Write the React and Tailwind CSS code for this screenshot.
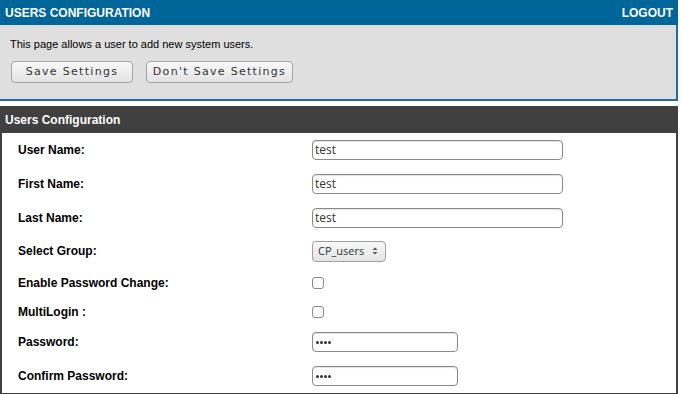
const rows = [
  { label: 'User Name:', kind: 'text', value: 'test', h: 'h-[34px]' },
  { label: 'First Name:', kind: 'text', value: 'test', h: 'h-[34px]' },
  { label: 'Last Name:', kind: 'text', value: 'test', h: 'h-[33px]' },
  { label: 'Select Group:', kind: 'select', value: 'CP_users', h: 'h-[34px]' },
  { label: 'Enable Password Change:', kind: 'check', h: 'h-[30px]' },
  { label: 'MultiLogin :', kind: 'check', h: 'h-[27px]' },
  { label: 'Password:', kind: 'password', h: 'h-[34px]' },
  { label: 'Confirm Password:', kind: 'password', h: 'h-[34px]' }
]

const Field = ({ row }) => {
  if (row.kind === 'text') {
    return (
      <div className="w-[251px] h-[20px] border border-[#8a8a8a] rounded-[4px] bg-white flex items-center pl-[2px] text-[12px] text-[#333] font-['Open_Sans',sans-serif] shadow-[inset_0_1px_1px_rgba(0,0,0,0.12)]">
        {row.value}
      </div>
    )
  }
  if (row.kind === 'password') {
    return (
      <div className="w-[146px] h-[20px] border border-[#8a8a8a] rounded-[4px] bg-white flex items-center pl-[3px] gap-[1px] shadow-[inset_0_1px_1px_rgba(0,0,0,0.12)]">
        {[0, 1, 2, 3].map(i => (
          <span key={i} className="w-[3px] h-[3px] rounded-full bg-[#333]"></span>
        ))}
      </div>
    )
  }
  if (row.kind === 'select') {
    return (
      <div className="w-[74px] h-[21px] border border-[#a0a0a0] rounded-[4px] bg-gradient-to-b from-[#f8f8f8] to-[#e4e4e4] flex items-center justify-between pl-[5px] pr-[7px] text-[11px] text-[#333] font-['Open_Sans',sans-serif]">
        <span>{row.value}</span>
        <svg width="6" height="10" viewBox="0 0 6 10">
          <path d="M3 1.5 L5.5 4 L0.5 4 Z" fill="#555" />
          <path d="M3 8.5 L5.5 6 L0.5 6 Z" fill="#555" />
        </svg>
      </div>
    )
  }
  return <div className="w-[12px] h-[12px] border border-[#8a8a8a] rounded-[3px] bg-white"></div>
}

const App = () => {
  return (
    <div className="w-[678px] bg-white font-['Liberation_Sans',Arial,sans-serif]">
      <div className="h-[25px] bg-[#006699] flex items-center justify-between px-[5px] text-white text-[12px] font-bold">
        <span>USERS CONFIGURATION</span>
        <span>LOGOUT</span>
      </div>

      <div className="h-[76px] bg-[#dfdfdf] border-r-2 border-b-2 border-[#1f6f98] pl-[11px] pt-[12px]">
        <p className="text-[11px] text-black leading-[14px] -ml-[1px]">This page allows a user to add new system users.</p>
        <div className="flex gap-[13px] mt-[10px]">
          <button className="w-[122px] h-[22px] border border-[#a6a6a6] rounded-[4px] bg-gradient-to-b from-[#f9f9f9] to-[#e3e3e3] text-[11px] text-[#333] tracking-[1.3px] font-['DejaVu_Sans',sans-serif]">
            Save Settings
          </button>
          <button className="w-[147px] h-[22px] border border-[#a6a6a6] rounded-[4px] bg-gradient-to-b from-[#f9f9f9] to-[#e3e3e3] text-[11px] text-[#333] tracking-[1.3px] font-['DejaVu_Sans',sans-serif]">
            Don't Save Settings
          </button>
        </div>
      </div>

      <div className="mt-[5px] h-[27px] bg-[#404040] flex items-center px-[5px] text-white text-[12px] font-bold">
        Users Configuration
      </div>

      <div className="border-l-2 border-r-2 border-b-2 border-[#404040]">
        {rows.map(row => (
          <div key={row.label} className={`${row.h} flex items-center`}>
            <div className="w-[310px] pl-[16px] text-[12px] font-bold text-black">{row.label}</div>
            <Field row={row} />
          </div>
        ))}
      </div>
    </div>
  )
}

export default App
